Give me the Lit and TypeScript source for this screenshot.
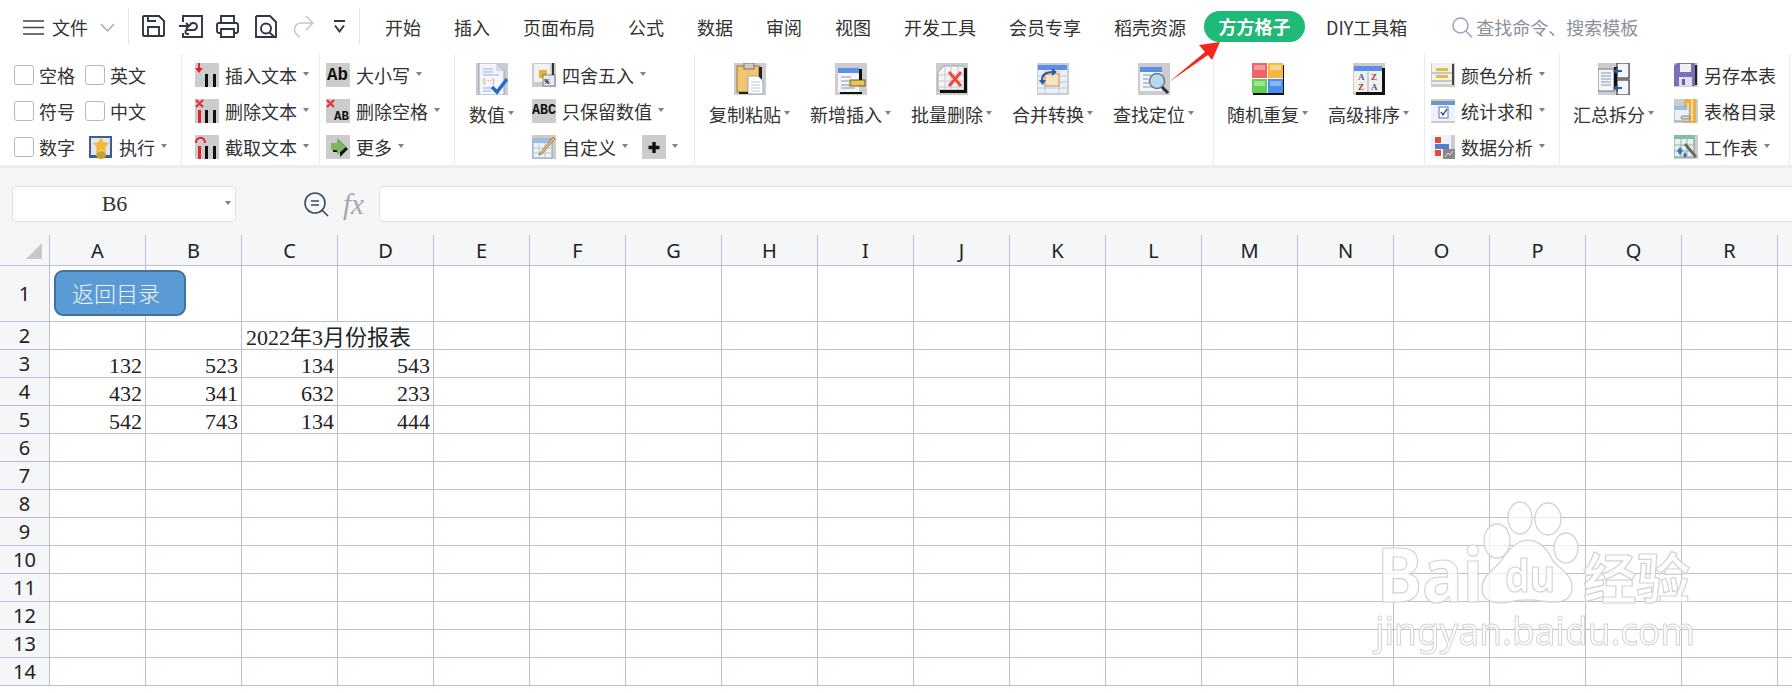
import { LitElement, html, css, svg, nothing } from 'lit';
import { customElement } from 'lit/decorators.js';

const BG = svg`<rect width="24" height="24" fill="#ccc"/>`;
const BG32 = svg`<rect width="32" height="32" fill="#ccc"/>`;
const BARS = svg`<rect x="10" y="11" width="3" height="13" fill="#111"/><rect x="18" y="11" width="3" height="13" fill="#111"/>`;
const REDX = svg`<path d="M1 1l7 7M8 1L1 8" stroke="#e8363a" stroke-width="2.4"/>`;

const smallIcons: Record<string, any> = {
  insert: svg`${BG}${BARS}<rect x="3" y="0" width="2" height="7" fill="#e8202a"/><path d="M0 5h8l-4 5z" fill="#e8202a"/>`,
  remove: svg`${BG}${BARS}${REDX}<rect x="3" y="11" width="3" height="13" fill="#e8202a"/>`,
  cut: svg`${BG}${BARS}<rect x="3" y="11" width="3" height="13" fill="#e8202a"/><path d="M1 8c0-7 9-7 9 0" fill="none" stroke="#e8202a" stroke-width="2"/>`,
  ab: svg`${BG}<text x="1" y="17" class="mono" font-size="18" textLength="21" lengthAdjust="spacingAndGlyphs">Ab</text>`,
  delSpace: svg`${BG}${REDX}<text x="8" y="21" class="mono" font-size="13" textLength="15" lengthAdjust="spacingAndGlyphs">AB</text>`,
  more: svg`${BG}<path d="M6 9h6V4l9 9-8 8v-5H6z" fill="#111" transform="translate(1 1)"/><path d="M5 8h6V3l9 9-9 8v-5H5z" fill="#7fb55a"/>`,
  run: svg`<rect y="1" width="23" height="22" fill="#3b5e9a"/><rect x="2" y="3" width="19" height="17" fill="#e4e6ec"/><path d="M12 2l2.6 5.2 5.6.8-4 4 1 5.6-5.2-2.8-5.2 2.8 1-5.6-4-4 5.6-.8z" fill="#f5b93a"/><ellipse cx="12" cy="20" rx="5" ry="4" fill="#caa12f"/>`,
  round: svg`${BG}<rect x="2" y="1" width="16" height="18" fill="#f3f3ee"/><rect x="20" y="0" width="2" height="17" fill="#333"/><rect x="7" y="7" width="8" height="8" fill="#d9b43e"/><rect x="11" y="12" width="12" height="11" fill="#e4e8f0" stroke="#444" stroke-width=".6"/><text x="12.5" y="21" font-size="8" class="mono">%</text>`,
  abc: svg`${BG}<text x="0" y="15" class="mono" font-size="14" textLength="24" lengthAdjust="spacingAndGlyphs">ABC</text>`,
  custom: svg`${BG}<rect x="1" y="4" width="19" height="19" fill="#f0f3f8" stroke="#8aa1be"/><rect x="1" y="4" width="19" height="4" fill="#9cbcea"/><path d="M1 13h19M1 18h19M7 8v15M13 8v15" stroke="#b6c4d8"/><path d="M8 18L21 2l2 2-13 15-3 1z" fill="#e9b868" stroke="#7a5a2a" stroke-width=".6"/>`,
  plus: svg`${BG}<path d="M12 7v11M6.500 12.500h11" stroke="#111" stroke-width="3.400"/>`,
  color: svg`${BG}<rect x="1" y="0" width="20" height="21" fill="#f2f2ea"/><rect x="21" y="1" width="2" height="21" fill="#444"/><rect x="5" y="5" width="12" height="3" fill="#e0bd4a"/><rect x="5" y="12" width="12" height="3" fill="#e0bd4a"/><path d="M1 10h20M1 18h20" stroke="#999"/>`,
  sum: svg`${BG}<rect x="0" y="2" width="24" height="20" fill="#eef3fb"/><rect x="0" y="2" width="24" height="4" fill="#6f94c8"/><rect x="8" y="8" width="9" height="11" fill="#fff" stroke="#5a79a8"/><path d="M10 13l2 3 4-6" fill="none" stroke="#2f58a8" stroke-width="1.500"/>`,
  data: svg`${BG}<rect x="0" y="0" width="20" height="24" fill="#f0f2f5"/><rect x="4" y="2" width="6" height="6" fill="#e04a3c"/><rect x="4" y="9" width="14" height="5" fill="#4f7fd0"/><rect x="4" y="15" width="6" height="6" fill="#e04a3c"/><rect x="12" y="14" width="12" height="10" fill="#888"/><path d="M14 22l3-4 2 2 3-4" fill="none" stroke="#ddd"/>`,
  save: svg`${BG}<path d="M3 0h18v23H0V3z" fill="#7c6fb8"/><rect x="6" y="1" width="11" height="8" fill="#f0f0f5"/><rect x="5" y="14" width="13" height="9" fill="#e0e0ec"/><rect x="8" y="16" width="3" height="6" fill="#6a5ca8"/><rect x="21" y="2" width="2" height="20" fill="#222"/>`,
  toc: svg`${BG}<rect x="10" y="0" width="12" height="24" fill="#eab04a"/><rect x="0" y="8" width="15" height="14" fill="#eef2f8" stroke="#8aa1be"/><rect x="0" y="8" width="15" height="3" fill="#9cbcea"/><path d="M14 4v18M18 0v22" stroke="#fff"/><rect x="7" y="17" width="9" height="3" rx="1.500" fill="#ddd" stroke="#555" stroke-width=".7"/>`,
  sheet: svg`${BG}<rect x="0" y="0" width="20" height="22" fill="#e6f0ea" stroke="#7a9a8c"/><rect x="0" y="0" width="20" height="4" fill="#7fbfa0"/><path d="M0 10h20M0 16h20M7 4v18M13 4v18" stroke="#9ab5a8"/><path d="M12 8l11 13-2 2L10 10z" fill="#666"/><path d="M6 12l3 4-3 4-3-4zM11 17l2 3-2 3-2-3z" fill="#3c70c8"/>`,
};

const bigIcons: Record<string, any> = {
  value: svg`${BG32}<path d="M3 0h17l8 8v24H3z" fill="#f4f6fb" stroke="#93a2b8"/><path d="M20 0v8h8" fill="#d5dbe6"/><path d="M7 6h10M7 9h10M7 12h16M7 25h12M7 28h8" stroke="#8fb0dc"/><text x="7" y="20" font-size="7" fill="#e07a28" class="sans">(···)</text><path d="M16 24l5 5 10-13" fill="none" stroke="#2b69c8" stroke-width="3.500"/>`,
  paste: svg`${BG32}<rect x="3" y="3" width="22" height="26" fill="#f2c46f" stroke="#9a7a3a"/><rect x="25" y="4" width="3" height="26" fill="#222"/><rect x="10" y="0" width="10" height="6" fill="#cfc9ba" stroke="#777"/><path d="M14 13h10l5 5v13H14z" fill="#fff" stroke="#9aa"/><path d="M17 19h9M17 22h9M17 25h9M17 28h9" stroke="#bcc6d6"/><rect x="5" y="29" width="9" height="2" fill="#222"/>`,
  add: svg`${BG32}<rect x="3" y="5" width="21" height="24" fill="#f4f6fb"/><rect x="3" y="5" width="21" height="5" fill="#5d8fe8"/><path d="M6 14h10M6 18h8M6 22h14M6 25h14" stroke="#8a93a8"/><rect x="15" y="17" width="15" height="6" fill="#e5c650" stroke="#6a5a20"/><rect x="24" y="6" width="3" height="11" fill="#111"/><rect x="5" y="29" width="22" height="2" fill="#111"/>`,
  del: svg`${BG32}<path d="M8 3h20v24H2V9z" fill="#f5f5f5" stroke="#9aa"/><path d="M2 12h26M2 18h26M2 24h26M9 3v24M15 3v24M22 3v24" stroke="#c4c8d0"/><path d="M13 9l12 14M25 9L13 23" stroke="#ee4a3a" stroke-width="3"/><rect x="28" y="5" width="3" height="25" fill="#111"/><rect x="4" y="27" width="27" height="3" fill="#111"/>`,
  merge: svg`${BG32}<rect x="1" y="2" width="29" height="28" fill="#eaf0fb"/><rect x="1" y="2" width="29" height="5" fill="#5d8fe8"/><path d="M1 13h29M1 19h29M1 25h29M8 7v23M22 7v23" stroke="#b8c8e4"/><rect x="8" y="11" width="14" height="12" fill="#f5e4c8" stroke="#e88a30"/><path d="M5 17c0-6 5-8 11-8" fill="none" stroke="#2a5aa8" stroke-width="2"/><path d="M15 5l5 4-5 4zM2 17h7l-3.500 5z" fill="#2a5aa8"/>`,
  find: svg`${BG32}<rect x="2" y="4" width="22" height="24" fill="#f2f5fb"/><rect x="2" y="4" width="22" height="5" fill="#5d8fe8"/><path d="M5 12h8M5 16h5M5 20h6M5 24h14" stroke="#8a93a8"/><circle cx="19" cy="18" r="7.500" fill="#b8d8f0" stroke="#6a7a8a" stroke-width="1.500"/><path d="M24 24l6 6" stroke="#333" stroke-width="3"/>`,
  random: svg`<rect x="0" y="0" width="15" height="15" fill="#f0646a"/><rect x="16" y="0" width="15" height="15" fill="#f5b83f"/><rect x="0" y="16" width="15" height="14" fill="#62d055"/><rect x="16" y="16" width="15" height="14" fill="#4c8cf0"/><rect x="2" y="2" width="11" height="5" fill="#f79a9e"/><rect x="18" y="2" width="11" height="5" fill="#fbd786"/><rect x="2" y="18" width="11" height="5" fill="#9be690"/><rect x="18" y="18" width="11" height="5" fill="#8ab5f8"/><rect x="1" y="30" width="31" height="2" fill="#111"/><rect x="31" y="2" width="1" height="28" fill="#111"/>`,
  sort: svg`${BG32}<rect x="1" y="3" width="28" height="26" fill="#f2f0ea"/><rect x="1" y="3" width="28" height="5" fill="#5d8fe8"/><path d="M15 8v21" stroke="#aaa"/><text x="5" y="17" class="az blue">A</text><text x="5" y="27" class="az red">Z</text><text x="18" y="17" class="az red">Z</text><text x="18" y="27" class="az blue">A</text><rect x="29" y="5" width="3" height="25" fill="#111"/><rect x="3" y="29" width="29" height="3" fill="#111"/>`,
  split: svg`${BG32}<rect x="0" y="6" width="16" height="22" fill="#f4f6fb" stroke="#777"/><path d="M3 10h10M3 13h10M3 16h10M3 19h10M3 22h10" stroke="#8a93a8"/><rect x="19" y="0" width="12" height="15" fill="#f4f6fb" stroke="#222"/><rect x="19" y="17" width="12" height="15" fill="#f4f6fb" stroke="#222"/><rect x="16" y="4" width="3" height="22" fill="#111"/><path d="M24 8h-6M24 25h-6" stroke="#2a5aa8" stroke-width="2"/><path d="M20 4l-5 4 5 4zM20 21l-5 4 5 4z" fill="#2a5aa8"/>`,
};

const small = (icon: string, label: string, caret = true, plus = false) => ({ icon, label, caret, plus });
const big = (icon: string, label: string) => ({ big: true, icon, label });

const GROUPS: any[] = [
  { width: 138, pad: 13, gap: 0, items: [[small('insert', '插入文本'), small('remove', '删除文本'), small('cut', '截取文本')]] },
  { width: 135, pad: 6, gap: 0, items: [[small('ab', '大小写'), small('delSpace', '删除空格'), small('more', '更多')]] },
  { width: 240, pad: 14, gap: 18, items: [big('value', '数值'), [small('round', '四舍五入'), small('abc', '只保留数值'), small('custom', '自定义', true, true)]] },
  { width: 519, pad: 14, gap: 20, items: [big('paste', '复制粘贴'), big('add', '新增插入'), big('del', '批量删除'), big('merge', '合并转换'), big('find', '查找定位')] },
  { width: 211, pad: 13, gap: 20, items: [big('random', '随机重复'), big('sort', '高级排序')] },
  { width: 135, pad: 6, gap: 0, items: [[small('color', '颜色分析'), small('sum', '统计求和'), small('data', '数据分析')]] },
  { width: 230, pad: 13, gap: 20, items: [big('split', '汇总拆分'), [small('save', '另存本表', false), small('toc', '表格目录', false), small('sheet', '工作表')]] },
];

const TABS = ['开始', '插入', '页面布局', '公式', '数据', '审阅', '视图', '开发工具', '会员专享', '稻壳资源'];
const COLS = 'ABCDEFGHIJKLMNOPQRS'.split('');
const VALUES: Record<number, number[]> = {
  3: [132, 523, 134, 543],
  4: [432, 341, 632, 233],
  5: [542, 743, 134, 444],
};

@customElement('app-root')
export class AppRoot extends LitElement {
  static styles = css`
    :host {
      display: block;
      position: relative;
      width: 100%;
      height: 693px;
      overflow: hidden;
      background: #fff;
      color: #333;
      font: 18px/1 'Noto Sans CJK SC', 'Noto Sans', sans-serif;
    }
    .top {
      display: flex;
      align-items: center;
      height: 54px;
      padding-left: 23px;
      box-sizing: border-box;
    }
    .file {
      display: flex;
      align-items: center;
      gap: 8px;
    }
    .chev {
      margin-left: 4px;
    }
    .vsep {
      width: 1px;
      height: 36px;
      margin-top: -2px;
      background: #e2e3e6;
    }
    .vsep.one {
      margin-left: 13px;
    }
    .quick {
      display: flex;
      align-items: center;
      gap: 13px;
      margin: 0 14px 0 13px;
    }
    .quick svg {
      margin-top: -2px;
      stroke: #2f3644;
      stroke-width: 1.9;
      fill: none;
    }
    .quick .off {
      stroke: #c4c6c9;
      stroke-width: 1.5;
    }
    .ml1 {
      margin-left: 1px;
    }
    .ml3 {
      margin-left: 3px;
    }
    .ml7 {
      margin-left: 7px;
    }
    .tabs {
      display: flex;
      align-items: center;
      gap: 33px;
      margin-left: 25px;
    }
    .tab.pill {
      margin-left: -15px;
      margin-right: -12px;
      width: 101px;
      height: 31px;
      margin-top: -2px;
      border-radius: 16px;
      background: #1fb978;
      color: #fff;
      font-weight: 700;
      display: flex;
      align-items: center;
      justify-content: center;
    }
    .search {
      display: flex;
      align-items: center;
      gap: 3px;
      margin-left: 12px;
      color: #8b909c;
    }
    .ribbon {
      display: flex;
      height: 114px;
      box-sizing: border-box;
      border-bottom: 3px solid #eceded;
    }
    .group {
      display: flex;
      box-sizing: border-box;
      height: 111px;
      border-right: 1px solid #eaebed;
    }
    .group.first {
      display: grid;
      grid-template-columns: 71px 1fr;
      grid-auto-rows: 36px;
      width: 182px;
      padding: 3px 0 0 14px;
    }
    .check {
      display: flex;
      align-items: center;
      gap: 5px;
    }
    .box {
      width: 18px;
      height: 18px;
      border: 1px solid #b4b8c0;
      border-radius: 3px;
      background: #fff;
    }
    .rows {
      display: flex;
      flex-direction: column;
      padding-top: 3px;
    }
    .row {
      display: flex;
      align-items: center;
      height: 36px;
      gap: 6px;
      white-space: nowrap;
    }
    .row .run {
      margin-left: 4px;
    }
    .row .plus {
      margin-left: 8px;
    }
    .big {
      display: flex;
      flex-direction: column;
      align-items: center;
      padding-top: 9px;
    }
    .big .label {
      display: flex;
      align-items: center;
      height: 38px;
      white-space: nowrap;
    }
    .caret {
      width: 0;
      height: 0;
      margin: -3px 0 0 3px;
      border: 3.5px solid transparent;
      border-top: 4px solid #7d808b;
      border-bottom: 0;
    }
    .row .caret {
      margin-left: 0;
    }
    svg {
      display: block;
      flex: none;
    }
    .mono {
      font-family: 'Liberation Mono', monospace;
      font-weight: 700;
      fill: #111;
    }
    .sans {
      font-family: 'Liberation Sans', sans-serif;
    }
    .az {
      font: 700 9px 'Liberation Serif', serif;
    }
    .blue {
      fill: #3a5a9c;
    }
    .red {
      fill: #a33a3a;
    }
    .fbar {
      display: flex;
      height: 67px;
      padding: 18px 0 13px 12px;
      box-sizing: border-box;
      background: #f5f6f8;
    }
    .namebox,
    .finput {
      box-sizing: border-box;
      height: 36px;
      background: #fff;
      border: 1px solid #dfe1e6;
      border-radius: 4px;
    }
    .namebox {
      display: flex;
      align-items: center;
      width: 224px;
      padding: 0 4px 0 0;
      font: 22px 'Liberation Serif', serif;
      color: #333;
    }
    .namebox span {
      flex: 1;
      padding-right: 6px;
      text-align: center;
    }
    .fn {
      display: flex;
      align-items: center;
      gap: 14px;
      margin-left: 68px;
    }
    .fx {
      font: italic 29px 'Liberation Serif', serif;
      color: #a4a7ad;
      width: 23px;
      margin-right: 13px;
    }
    .finput {
      flex: 1;
      margin-right: -10px;
    }
    .sheet {
      display: grid;
      grid-template-columns: 50px repeat(19, 96px);
      grid-template-rows: 31px 56px repeat(14, 28px);
      color: #222;
    }
    .cell,
    .ch,
    .rh {
      box-sizing: border-box;
      border-right: 1px solid #b8bfd6;
      border-bottom: 1px solid #b8bfd6;
    }
    .cell {
      display: flex;
      align-items: center;
      justify-content: flex-end;
      padding: 5px 3px 0 0;
      font: 22px/1 'Liberation Serif', 'Noto Sans CJK SC', serif;
      white-space: nowrap;
    }
    .cell.title {
      grid-column: span 2;
      justify-content: flex-start;
      padding-left: 4px;
    }
    .ch,
    .rh {
      display: flex;
      align-items: center;
      justify-content: center;
      background: #f5f6f8;
      font: 20px/1 'Noto Sans', sans-serif;
    }
    .ch {
      padding-top: 2px;
    }
    .corner {
      background: #f5f6f8;
      border-right: 1px solid #b8bfd6;
      border-bottom: 1px solid #b8bfd6;
      box-sizing: border-box;
      padding: 8px 0 0 26px;
    }
    .cell.first {
      position: relative;
    }
    .linkbtn {
      position: absolute;
      left: 4px;
      top: 4px;
      width: 132px;
      height: 46px;
      box-sizing: border-box;
      border: 2px solid #41719c;
      border-radius: 9px;
      background: #5b9bd5;
      color: #eef4fb;
      font: 300 22px/1 'Noto Sans CJK SC', sans-serif;
      display: flex;
      align-items: center;
      justify-content: center;
      padding: 0 8px 3px 0;
      z-index: 1;
    }
    .arrow {
      position: absolute;
      left: 1165px;
      top: 36px;
    }
    .mark {
      position: absolute;
      left: 1370px;
      top: 495px;
      pointer-events: none;
      filter: blur(0.4px);
    }
    .mark text {
      fill: #fff;
      fill-opacity: 0.8;
      stroke: #d2d2d5;
      stroke-width: 1.2;
      font-family: 'Noto Sans', 'Noto Sans CJK SC', sans-serif;
      font-weight: 700;
    }
    .mark .thin {
      font-weight: 400;
      stroke-width: 1;
    }
    .mark .paw {
      fill: #fff;
      fill-opacity: 0.75;
      stroke: #d2d2d5;
      stroke-width: 1.3;
    }
  `;

  renderItem(item: any) {
    if (item.big) {
      return html`<div class="big">
        <svg width="32" height="32" viewBox="0 0 32 32">${bigIcons[item.icon]}</svg>
        <div class="label">${item.label}<i class="caret"></i></div>
      </div>`;
    }
    return html`<div class="rows">
      ${item.map(
        (r: any) => html`<div class="row">
          <svg width="24" height="24" viewBox="0 0 24 24">${smallIcons[r.icon]}</svg>
          ${r.label}${r.caret ? html`<i class="caret"></i>` : nothing}
          ${r.plus
            ? html`<svg class="plus" width="24" height="24" viewBox="0 0 24 24">${smallIcons.plus}</svg><i class="caret"></i>`
            : nothing}
        </div>`
      )}
    </div>`;
  }

  renderTop() {
    return html`<div class="top">
      <div class="file">
        <svg width="21" height="15" viewBox="0 0 21 15" fill="none" stroke="#444" stroke-width="1.500">
          <path d="M0 1h21M0 7.500h21M0 14h21" />
        </svg>
        文件
        <svg class="chev" width="15" height="9" viewBox="0 0 15 9" fill="none" stroke="#a4a7ad" stroke-width="1.300">
          <path d="M1 1l6.500 7 6.500-7" />
        </svg>
      </div>
      <div class="vsep one"></div>
      <div class="quick">
        <svg width="23" height="22" viewBox="0 0 23 22">
          <path d="M2 1h15l5 5v14a1 1 0 0 1-1 1H2a1 1 0 0 1-1-1V2a1 1 0 0 1 1-1zM6 1v5h8M6 21v-9h11v9" />
        </svg>
        <svg class="ml1" width="24" height="23" viewBox="0 0 24 23">
          <path d="M4 7V1h19v21H4v-4M0 11h10M7 8l3 3-3 3M10 19H8.500a2 2 0 0 1 0-4h6a3.500 3.500 0 0 0 0-7H14a3 3 0 0 0-3 3" />
        </svg>
        <svg width="23" height="23" viewBox="0 0 23 23">
          <path d="M5 8V1h13v7M5 18H3a2 2 0 0 1-2-2v-6a2 2 0 0 1 2-2h17a2 2 0 0 1 2 2v6a2 2 0 0 1-2 2h-2M5 14h13v8H5z" />
        </svg>
        <svg class="ml3" width="22" height="23" viewBox="0 0 22 23">
          <path d="M2 1h13l6 6v15H1V2zM6 13.500a5 5 0 1 0 10 0a5 5 0 1 0-10 0M14.500 17.500l5 4.500" />
        </svg>
        <svg class="off ml3" width="21" height="23" viewBox="0 0 21 23">
          <path d="M7 22C-1 18 0 8 9 8h11M13 1l7 7-7 7" />
        </svg>
        <svg class="ml7" width="11" height="13" viewBox="0 0 11 13">
          <path d="M0 1h11M1 5.500l4.500 6 4.500-6" />
        </svg>
      </div>
      <div class="vsep"></div>
      <div class="tabs">
        ${TABS.map((t) => html`<div class="tab">${t}</div>`)}
        <div class="tab pill">方方格子</div>
        <div class="tab">DIY工具箱</div>
        <div class="search">
          <svg width="21" height="21" viewBox="0 0 21 21" fill="none" stroke="#9aa3b8" stroke-width="1.500">
            <circle cx="8.500" cy="8.500" r="7.500" /><path d="M14 14l6 6.500" />
          </svg>
          查找命令、搜索模板
        </div>
      </div>
    </div>`;
  }

  renderSheet() {
    const rows = Array.from({ length: 14 }, (_, i) => i + 1);
    return html`<div class="sheet">
      <div class="corner">
        <svg width="16" height="16" viewBox="0 0 16 16"><path d="M0 16L16 0v16z" fill="#c6c8ca" /></svg>
      </div>
      ${COLS.map((c) => html`<div class="ch">${c === 'S' ? '' : c}</div>`)}
      ${rows.map((r) => {
        const cols = COLS.map((_, i) => {
          if (r === 1 && i === 0) {
            return html`<div class="cell first"><div class="linkbtn">返回目录</div></div>`;
          }
          if (r === 2 && i === 2) return html`<div class="cell title">2022年3月份报表</div>`;
          if (r === 2 && i === 3) return nothing;
          return html`<div class="cell">${VALUES[r]?.[i] ?? ''}</div>`;
        });
        return html`<div class="rh">${r}</div>${cols}`;
      })}
    </div>`;
  }

  render() {
    return html`
      ${this.renderTop()}
      <div class="ribbon">
        <div class="group first">
          <div class="check"><i class="box"></i>空格</div>
          <div class="check"><i class="box"></i>英文</div>
          <div class="check"><i class="box"></i>符号</div>
          <div class="check"><i class="box"></i>中文</div>
          <div class="check"><i class="box"></i>数字</div>
          <div class="row">
            <svg class="run" width="24" height="24" viewBox="0 0 24 24">${smallIcons.run}</svg>
            执行<i class="caret"></i>
          </div>
        </div>
        ${GROUPS.map(
          (g) => html`<div
            class="group"
            style="width:${g.width}px;padding-left:${g.pad}px;gap:${g.gap}px"
          >
            ${g.items.map((it: any) => this.renderItem(it))}
          </div>`
        )}
      </div>
      <div class="fbar">
        <div class="namebox"><span>B6</span><i class="caret"></i></div>
        <div class="fn">
          <svg width="25" height="25" viewBox="0 0 25 25" fill="none" stroke="#3f4a5e" stroke-width="1.600">
            <circle cx="11" cy="11" r="10" /><path d="M7 9h8M7 13h8M18 18l6 6" />
          </svg>
          <span class="fx">fx</span>
        </div>
        <div class="finput"></div>
      </div>
      ${this.renderSheet()}
      <svg class="arrow" width="60" height="50" viewBox="0 0 60 50">
        <path d="M4 46L40 16l-6-7 21-3-8 18-4-5z" fill="#f6261c" />
      </svg>
      <svg class="mark" width="340" height="170" viewBox="0 0 340 170">
        <g class="paw">
          <ellipse cx="127" cy="46" rx="13" ry="17" />
          <ellipse cx="150" cy="23" rx="12" ry="16" />
          <ellipse cx="178" cy="24" rx="13" ry="16" />
          <ellipse cx="196" cy="53" rx="12" ry="15" />
          <path d="M150 47c14-6 26 4 32 17 4 8 20 14 20 28 0 17-17 16-31 14-12-2-20-2-32 1-13 2-27 1-27-14 0-12 12-18 19-27 5-8 11-16 19-19z" />
        </g>
        <text x="7" y="107" font-size="76" textLength="106" lengthAdjust="spacingAndGlyphs">Bai</text>
        <text x="135" y="97" font-size="44" textLength="50" lengthAdjust="spacingAndGlyphs">du</text>
        <text x="213" y="104" font-size="54" textLength="107" lengthAdjust="spacingAndGlyphs">经验</text>
        <text class="thin" x="5" y="150" font-size="38" textLength="320" lengthAdjust="spacingAndGlyphs">jingyan.baidu.com</text>
      </svg>
    `;
  }
}
